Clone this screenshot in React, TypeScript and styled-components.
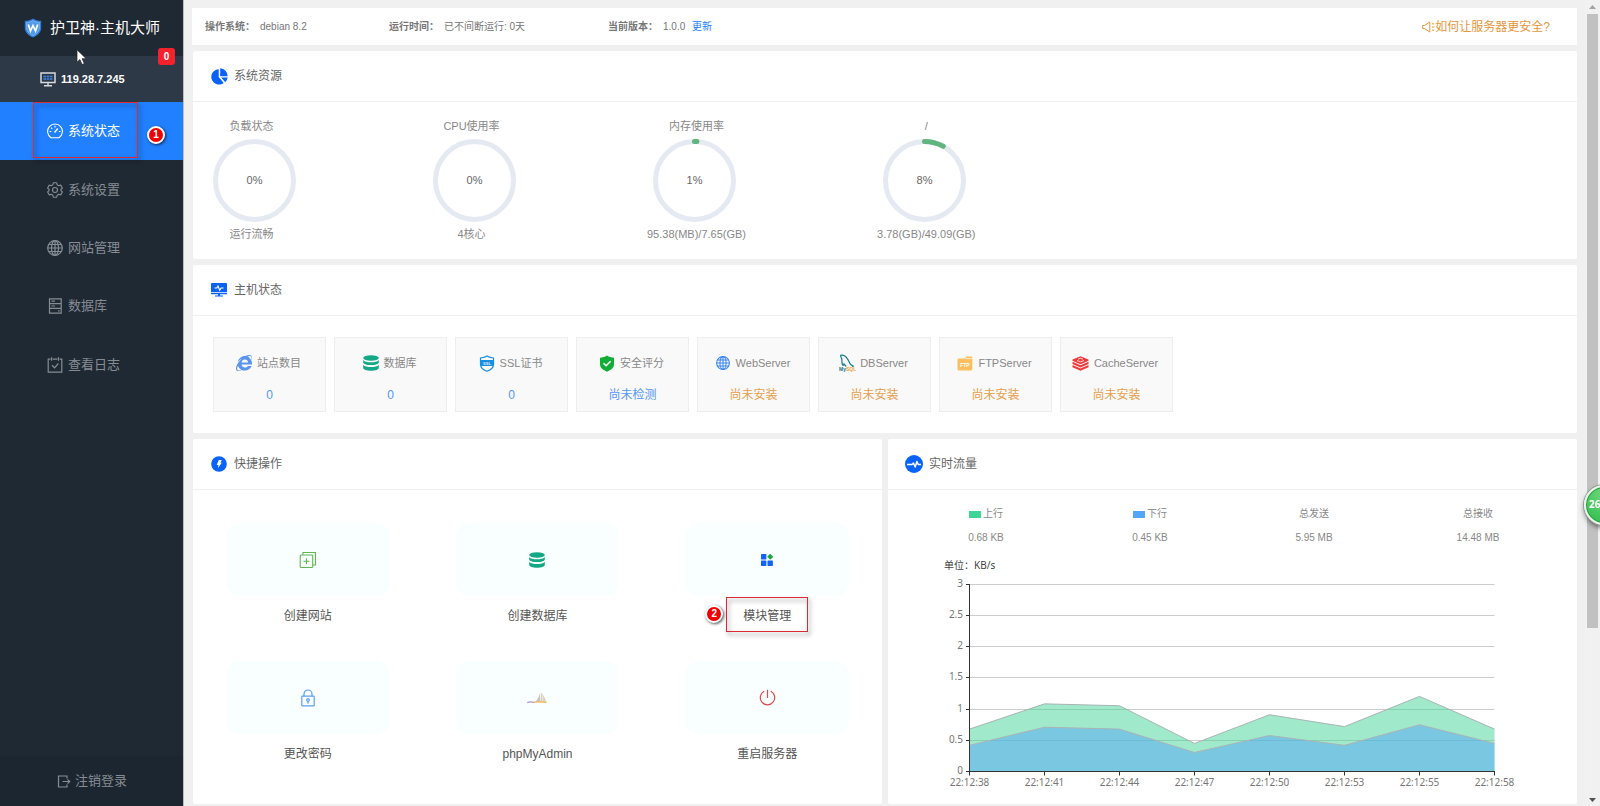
import React from "react";
import styled, { createGlobalStyle } from "styled-components";
import { FaInternetExplorer } from "react-icons/fa";

const GlobalStyle = createGlobalStyle`
  *, *::before, *::after { box-sizing: border-box; }
  body {
    margin: 0;
    background: #f0f0f0;
    color: #666;
    font: 12px/16px "Liberation Sans", "Noto Sans CJK SC", sans-serif;
  }
  a { color: inherit; text-decoration: none; }
  h1, h2, p, ul, dl, dd { margin: 0; padding: 0; font-weight: 400; }
  ul { list-style: none; }
  svg { display: block; flex: none; }
`;

/* ---------- frame ---------- */

const Page = styled.div`
  display: flex;
  min-height: 100vh;
`;

const Sidebar = styled.aside`
  position: relative;
  display: flex;
  flex-direction: column;
  flex: none;
  width: 184px;
  background: #1f2934;
  border-right: 1px solid #b9bcc0;
`;

const Brand = styled.h1`
  display: flex;
  align-items: center;
  gap: 8px;
  height: 56px;
  padding-left: 24px;
  color: #fff;
  font-size: 15px;
  line-height: 20px;
  white-space: nowrap;
`;

const Host = styled.div`
  position: relative;
  display: flex;
  align-items: center;
  gap: 5px;
  height: 46px;
  padding-left: 40px;
  background: #2e3947;
  color: #fff;
  font-size: 11px;
  font-weight: 700;
`;

const Count = styled.span`
  position: absolute;
  top: -8px;
  right: 8px;
  width: 17px;
  height: 17px;
  border-radius: 3px;
  background: #f5222d;
  font-size: 10px;
  line-height: 17px;
  text-align: center;
`;

const Nav = styled.nav`
  display: flex;
  flex-direction: column;
  height: 292px;
`;

const NavLink = styled.a<{ $active?: boolean }>`
  position: relative;
  display: flex;
  flex: 1;
  align-items: center;
  gap: 5px;
  padding-left: 47px;
  font-size: 13px;
  line-height: 20px;
  color: ${(p) => (p.$active ? "#fff" : "#868c93")};
  background: ${(p) => (p.$active ? "#2080ff" : "transparent")};
`;

const Logout = styled.button`
  display: flex;
  align-items: center;
  gap: 4px;
  height: 50px;
  margin-top: auto;
  padding: 0 0 0 57px;
  border: 0;
  background: #1c2630;
  color: #868c93;
  font: inherit;
  font-size: 13px;
`;

const Main = styled.main`
  display: flex;
  flex: 1;
  flex-direction: column;
  gap: 6px;
  min-width: 0;
  padding: 8px 8px 2px;
`;

/* ---------- annotations ---------- */

const Outline = styled.span`
  position: absolute;
  border: 1px solid #d92a35;
  filter: drop-shadow(2px 3px 2px rgba(0, 0, 0, 0.5));
  pointer-events: none;
`;

const NavOutline = styled(Outline)`
  top: 0;
  left: 33px;
  width: 105px;
  height: 56px;
`;

const LabelOutline = styled(Outline)`
  inset: 1px -17px 4px;
`;

const Step = styled.span`
  position: absolute;
  width: 18px;
  height: 18px;
  border: 2px solid #fff;
  border-radius: 50%;
  background: #f00000;
  box-shadow: 1px 1px 3px rgba(0, 0, 0, 0.7);
  color: #fff;
  font-size: 10px;
  font-weight: 700;
  line-height: 14px;
  text-align: center;
`;

const NavStep = styled(Step)`
  top: 24px;
  right: 18px;
`;

const LabelStep = styled(Step)`
  top: 9px;
  left: -38px;
`;

const Pointer = styled.svg`
  position: absolute;
  top: 49px;
  left: 76px;
  z-index: 2;
`;

const Ball = styled.div`
  position: fixed;
  top: 485px;
  right: -24px;
  width: 40px;
  height: 40px;
  padding-left: 3px;
  border: 2px solid #e9f3ea;
  border-radius: 50%;
  background: radial-gradient(circle at 50% 20%, #6fd67b, #3cc257 75%);
  box-shadow: 0 0 0 1px #8f9a90, inset 0 0 0 1px #279a3e, 0 3px 5px rgba(0, 0, 0, 0.5);
  color: #fff;
  font: 700 10px/34px "Noto Sans", sans-serif;
`;

const Track = styled.div`
  display: flex;
  flex: none;
  flex-direction: column;
  align-items: center;
  width: 15px;
  padding: 5px 0 4px;
  background: #f1f1f1;
`;

const Thumb = styled.div`
  flex: 0 0 77%;
  width: 11px;
  margin: 5px 0 auto;
  background: #c1c1c1;
`;

/* ---------- top bar ---------- */

const InfoBar = styled.header`
  display: flex;
  align-items: center;
  height: 37px;
  padding: 0 27px 0 13px;
  background: #fff;
  color: #777;
  font-size: 10px;
`;

const Info = styled.p<{ $width: number }>`
  flex: 0 0 ${(p) => p.$width}px;
  b { margin-right: 5px; }
  a { margin-left: 4px; color: #2080ff; }
`;

const Tip = styled.a`
  display: flex;
  align-items: center;
  margin-left: auto;
  color: #e6963c;
  font-size: 12px;
`;

/* ---------- cards ---------- */

const Panel = styled.section`
  margin-left: 1px;
  border-radius: 2px;
  background: #fff;
`;

const PanelTitle = styled.h2`
  display: flex;
  align-items: center;
  gap: 6px;
  height: 51px;
  padding-left: 17px;
  border-bottom: 1px solid #f0f0f0;
  font-size: 12px;
`;

const IconBox = styled.span<{ $size: number }>`
  display: flex;
  flex: none;
  align-items: center;
  justify-content: center;
  width: ${(p) => p.$size}px;
`;

const Gauges = styled.div`
  display: flex;
  gap: 131px;
  padding: 16px 14px 17px;
`;

const GaugeItem = styled.div`
  display: flex;
  flex-direction: column;
  color: #888;
  font-size: 11px;
  text-align: center;
`;

const Ring = styled.div`
  position: relative;
  width: 83px;
  height: 83px;
  margin: 5px 0 4px 6px;
`;

const Percent = styled.span`
  position: absolute;
  inset: 0;
  color: #666;
  line-height: 83px;
`;

const HostGrid = styled.ul`
  display: flex;
  flex-wrap: wrap;
  gap: 8px;
  padding: 21px 20px;
`;

const HostTile = styled.li`
  width: 113px;
  height: 75px;
  padding-top: 17px;
  border: 1px solid #eee;
  background: #f9f9f9;
  text-align: center;
`;

const HostName = styled.p`
  display: flex;
  align-items: center;
  justify-content: center;
  gap: 5px;
  height: 16px;
  padding-right: 2px;
  color: #888;
  font-size: 11px;
`;

const HostValue = styled.a<{ $warn?: boolean }>`
  display: block;
  margin-top: 16px;
  color: ${(p) => (p.$warn ? "#e6a04c" : "#5397fa")};
`;

const Bottom = styled.div`
  display: grid;
  grid-template-columns: 1fr 1fr;
  gap: 6px;
  margin-left: 1px;
  ${Panel} { margin-left: 0; }
`;

const Actions = styled.div`
  display: grid;
  grid-template-columns: repeat(3, 1fr);
  row-gap: 25px;
  padding: 33px 0 30px;
`;

const Action = styled.button`
  display: flex;
  flex-direction: column;
  align-items: center;
  padding: 0 33px;
  border: 0;
  background: none;
  color: #555;
  font: inherit;
`;

const ActionArt = styled.span`
  display: flex;
  align-items: center;
  justify-content: center;
  width: 100%;
  height: 73px;
  border-radius: 14px;
  background: #f9ffff;
`;

const ActionLabel = styled.span`
  position: relative;
  line-height: 40px;
`;

const Traffic = styled.div`
  padding: 16px 17px 0 16px;
`;

const Totals = styled.dl`
  display: grid;
  grid-template-columns: repeat(4, 1fr);
  color: #888;
  font-size: 10px;
  text-align: center;
  dt { display: flex; align-items: center; justify-content: center; gap: 2px; margin-bottom: 8px; }
`;

const Swatch = styled.i<{ $color: string }>`
  width: 12px;
  height: 7px;
  background: ${(p) => p.$color};
`;

const ChartSvg = styled.svg`
  width: 100%;
  height: auto;
  margin-top: 4px;
  font-family: "Noto Sans", "Noto Sans CJK SC", sans-serif;
  font-size: 10px;
`;

/* ---------- icons ---------- */

const line = { fill: "none", stroke: "currentColor" } as const;

const ShieldLogo = () => (
  <svg width="18" height="20" viewBox="0 0 18 20">
    <path d="M9 .5C6.700 2 3.800 2.800.8 2.800v7c0 4.500 3.200 7.700 8.200 9.700 5-2 8.200-5.200 8.200-9.700v-7C14.200 2.800 11.300 2 9 .5z" fill="#2f7bd6" />
    <path d="M9 2.600C7 3.700 4.900 4.300 2.600 4.400v5.300c0 3.600 2.500 6.200 6.400 7.900 3.900-1.700 6.400-4.300 6.400-7.900V4.400C13.100 4.300 11 3.700 9 2.600z" fill="#4f9bea" stroke="#8fc2f7" strokeWidth=".7" />
    <path d="M4.300 6.500l2.200 6.500L9 7.500l2.500 5.500 2.200-6.500" fill="none" stroke="#fff" strokeWidth="1.700" />
  </svg>
);

const ComputerIcon = () => (
  <svg width="16" height="15" viewBox="0 0 16 15">
    <rect x="1" y="1" width="14" height="9.500" fill="none" stroke="#d5dae0" strokeWidth="1.500" />
    <path d="M3.500 4.500h9M3.500 7h9" stroke="#3d8cf0" strokeWidth="1.400" strokeDasharray="2.500 .7" />
    <path d="M8 10.500v3M4 13.800h8" stroke="#d5dae0" strokeWidth="1.400" />
  </svg>
);

const DashIcon = () => (
  <svg width="16" height="16" viewBox="0 0 16 16" {...line} strokeWidth="1.100">
    <path d="M4 14.700a7.400 7.400 0 1 1 8 0z" />
    <path d="M7.500 9.500l3.300-4" strokeWidth="1.400" />
    <path d="M8 2.800v1.700M2.600 8.500h1.700M11.900 8.500h1.600M4.200 4.700l1.100 1.100" />
  </svg>
);

const GearIcon = () => (
  <svg width="16" height="16" viewBox="0 0 16 16" {...line} strokeWidth="1.100" strokeLinejoin="round">
    <path d="M6.300.8h3.400l.5 2 1.500.9 2-.6 1.700 2.900L13.900 7.500v1.100l1.500 1.400-1.700 2.900-2-.6-1.500.9-.5 2H6.300l-.5-2-1.500-.9-2 .6L.6 10l1.500-1.400V7.500L.6 6l1.700-2.900 2 .6 1.500-.9z" />
    <circle cx="8" cy="8" r="2.500" />
  </svg>
);

const GlobeIcon = ({ size = 16, color = "currentColor" }: { size?: number; color?: string }) => (
  <svg width={size} height={size} viewBox="0 0 16 16" fill="none" stroke={color} strokeWidth="1.200">
    <circle cx="8" cy="8" r="7.300" />
    <ellipse cx="8" cy="8" rx="3.500" ry="7.300" />
    <path d="M8 .7v14.600M.7 8h14.600M1.600 4.500h12.800M1.600 11.500h12.800" />
  </svg>
);

const ServerIcon = () => (
  <svg width="16" height="16" viewBox="0 0 16 16" {...line} strokeWidth="1.200">
    <path d="M2.500.8h11.700v14.400H2.500zM2.500 5.600h11.700M2.500 10.400h11.700M4.500 3.200h3.500M4.500 8h3.500M11 12.900h1.500" />
  </svg>
);

const LogIcon = () => (
  <svg width="16" height="16" viewBox="0 0 16 16" {...line} strokeWidth="1.200">
    <path d="M3.500 2.200H1.200v12.900h13.600V2.200h-2.300M5.800 2.200h4.400M4.600.3v3.500M11.400.3v3.500M5 8.300l2.600 2.500 3.700-4.300" />
  </svg>
);

const ExitIcon = () => (
  <svg width="14" height="13" viewBox="0 0 14 13" {...line} strokeWidth="1.200">
    <path d="M10 3.500V1H1.500v11H10V9.500M5.500 6.500h7M10.500 4.300l2.200 2.200-2.200 2.200" />
  </svg>
);

const HornIcon = () => (
  <svg width="13" height="12" viewBox="0 0 13 12" {...line} strokeWidth="1">
    <path d="M.7 4.500v3h1.800L7.800 11V1L2.500 4.500zM10 2.800h2M10 6h2.500M10 9.200h2" />
  </svg>
);

const PieIcon = () => (
  <svg width="17" height="17" viewBox="0 0 17 17" fill="#0a62f7">
    <path d="M7.700 1.200A7.700 7.700 0 1 0 12.700 15L7.700 9z" />
    <path d="M9.200.3v7.900h7.500A7.900 7.900 0 0 0 9.200.3z" />
    <path d="M10.200 9.600l4 4.600a7.500 7.500 0 0 0 2.500-4.600z" />
  </svg>
);

const MonitorIcon = () => (
  <svg width="16" height="14" viewBox="0 0 16 14" fill="#0a62f7">
    <path d="M1 0h14a1 1 0 0 1 1 1v8H0V1a1 1 0 0 1 1-1zM0 9.800h16v1.400H0zM7 11h2v1.500H7zM4 12.500h8v1H4z" />
    <path d="M3.500 5h2.300l1.200-2 1.700 4.200L10 5h2.500" fill="none" stroke="#fff" strokeWidth="1.100" />
  </svg>
);

const BoltIcon = () => (
  <svg width="16" height="16" viewBox="0 0 16 16">
    <circle cx="8" cy="8" r="7.800" fill="#0a62f7" />
    <path d="M7.800 4h3L9.500 6.800h1.300L6.800 12.200 7.500 9H5.700z" fill="#fff" />
  </svg>
);

const PulseIcon = () => (
  <svg width="18" height="18" viewBox="0 0 18 18">
    <circle cx="9" cy="9" r="9" fill="#0a62f7" />
    <path d="M2 9.500h5l1.500-1.500 1.700 4 1.700-5.500 1.300 3H16" fill="none" stroke="#fff" strokeWidth="1.500" strokeLinejoin="round" />
  </svg>
);

const DiskIcon = () => (
  <svg width="16" height="16" viewBox="0 0 16 16" fill="#13a886">
    <ellipse cx="8" cy="3" rx="7.800" ry="2.800" />
    <path d="M.2 4.900C1.500 6.700 4.600 7.300 8 7.300s6.500-.6 7.800-2.400v2.600c0 1.500-3.500 2.600-7.800 2.600S.2 9 .2 7.500z" />
    <path d="M.2 9.700c1.300 1.800 4.400 2.400 7.800 2.400s6.500-.6 7.800-2.400v3.200c0 1.600-3.500 2.800-7.800 2.800S.2 14.500.2 12.900z" />
  </svg>
);

const SslIcon = () => (
  <svg width="16" height="17" viewBox="0 0 16 17">
    <path d="M8 1C6.200 2.200 3.800 2.900 1.500 3v6.500c0 3.300 2.600 5.300 6.500 6.800 3.900-1.500 6.500-3.500 6.500-6.800V3C12.200 2.900 9.800 2.200 8 1z" fill="#fff" stroke="#1a8fe0" strokeWidth="1.200" />
    <path d="M1.800 5h12.400v6H1.800z" fill="#1a8fe0" />
    <text x="8" y="9.500" fill="#d8eeff" fontSize="4" fontWeight="700" textAnchor="middle">SSL</text>
  </svg>
);

const SafeIcon = () => (
  <svg width="16" height="17" viewBox="0 0 16 17">
    <path d="M8 .5C6 1.900 3.600 2.600 1 2.800v6.500c0 3.600 3 5.900 7 7.400 4-1.500 7-3.800 7-7.400V2.800C12.400 2.600 10 1.900 8 .5z" fill="#12ad36" />
    <path d="M4.500 8.300l2.600 2.500 4.500-4.600" fill="none" stroke="#fff" strokeWidth="1.500" />
  </svg>
);

const MysqlIcon = () => (
  <svg width="17" height="18" viewBox="0 0 17 18">
    <path d="M1.500 1.300C4.500.7 7 2.500 8.500 4.800c1.200 1.900 1.900 4.200 3 5.400 1.200 1 2.300 1.300 2.800 2.200M1.500 1.300c.2 1.700 1 2.500 1.300 3.700.3 1.700-.2 4 .8 6 .7.9 1.200-.3 1.400-1.200.8 1 1.300 2 2.200 2.600" fill="none" stroke="#13798c" strokeWidth="1.200" />
    <path d="M14.800 12.300l-2-.3" stroke="#13798c" />
    <text x="0" y="17.300" fill="#25708c" fontSize="5" fontWeight="700">My<tspan fill="#f0a340">SQL</tspan></text>
  </svg>
);

const FtpIcon = () => (
  <svg width="16" height="15" viewBox="0 0 16 15">
    <path d="M1.500 2.500H8L9.500.6H14a1.300 1.300 0 0 1 1.300 1.300V13A1.500 1.500 0 0 1 14 14.500H2A1.500 1.500 0 0 1 .5 13V3.500a1 1 0 0 1 1-1z" fill="#fdbf5e" />
    <path d="M8.500 2.600h6.800" stroke="#fff" strokeWidth=".7" />
    <text x="8" y="10.500" fill="#fff" fontSize="5" fontWeight="700" textAnchor="middle">FTP</text>
  </svg>
);

const RedisIcon = () => (
  <svg width="17" height="15" viewBox="0 0 17 15" fill="#f0393b">
    <path d="M8.500.3l8 3.200v1.300l-8 3.500-8-3.500V3.500z" />
    <path d="M.5 5.800l8 3.500 8-3.500v2.300l-8 3.500-8-3.500z" />
    <path d="M.5 9.100l8 3.500 8-3.500v2.200l-8 3.500-8-3.500z" />
    <path d="M6 3.200l2.500-1 2.500 1M5 4.500l3.500 1.300L12 4.500" fill="none" stroke="#fff" strokeWidth=".8" />
  </svg>
);

const AddSiteIcon = () => (
  <svg width="18" height="18" viewBox="0 0 18 18" fill="none" stroke="#62b54f" strokeWidth="1.100">
    <rect x="1.200" y="4" width="12.500" height="12.500" rx="1" />
    <path d="M4 3.800V1.500h12.500V14H14M7.500 7.200v6M4.500 10.200h6" />
  </svg>
);

const ModulesIcon = () => (
  <svg width="12" height="12" viewBox="0 0 12 12" fill="#1464f4">
    <rect width="5.400" height="5.400" rx=".6" />
    <rect y="6.500" width="5.400" height="5.400" rx=".6" />
    <rect x="6.500" y="6.500" width="5.400" height="5.400" rx=".6" />
    <path d="M9.200-.3L12.200 2.700 9.200 5.700 6.200 2.700z" fill="#1fa83c" />
  </svg>
);

const LockIcon = () => (
  <svg width="16" height="18" viewBox="0 0 16 18" fill="none" stroke="#5b9ff2" strokeWidth="1.200">
    <rect x="1.800" y="7.200" width="12.400" height="9.600" rx=".6" />
    <path d="M4 7V5a4 4 0 0 1 8 0v2M8 12.200v2.600" />
    <circle cx="8" cy="11" r="1.300" />
  </svg>
);

const SailIcon = () => (
  <svg width="20" height="12" viewBox="0 0 20 12">
    <path d="M8.500 9.700c2-2 3.300-4.500 4.300-8.200.7 2.700.5 5.700-.3 8.200z" fill="#c3c7c2" />
    <path d="M13 9.700c1-2.700 1.200-5.700.8-9.200 2.300 2 4.700 5.700 5 9.200z" fill="#d9cfb8" />
    <path d="M15.200 9.700c.8-2 .8-4.500.3-6.500" fill="none" stroke="#f9ffff" strokeWidth=".7" />
    <path d="M6 10.500c4-1 9-1 13.500-.2" fill="none" stroke="#f3b765" strokeWidth="1.600" />
    <path d="M.3 10.600c2-.9 4-.9 6-.3" fill="none" stroke="#a59bc4" strokeWidth="1.400" />
  </svg>
);

const PowerIcon = () => (
  <svg width="17" height="17" viewBox="0 0 17 17" fill="none" stroke="#e2474b" strokeWidth="1.200">
    <path d="M5.200 2.200a7.200 7.200 0 1 0 6.600 0M8.500.8v8.200" />
  </svg>
);

/* ---------- data ---------- */

const navItems = [
  { label: "系统状态", icon: <DashIcon />, active: true },
  { label: "系统设置", icon: <GearIcon /> },
  { label: "网站管理", icon: <GlobeIcon /> },
  { label: "数据库", icon: <ServerIcon /> },
  { label: "查看日志", icon: <LogIcon /> },
];

const gauges = [
  { title: "负载状态", value: 0, note: "运行流畅" },
  { title: "CPU使用率", value: 0, note: "4核心" },
  { title: "内存使用率", value: 1, note: "95.38(MB)/7.65(GB)" },
  { title: "/", value: 8, note: "3.78(GB)/49.09(GB)" },
];

const hostItems = [
  { name: "站点数目", value: "0", icon: <FaInternetExplorer size={16} color="#5b95f0" /> },
  { name: "数据库", value: "0", icon: <DiskIcon /> },
  { name: "SSL证书", value: "0", icon: <SslIcon /> },
  { name: "安全评分", value: "尚未检测", icon: <SafeIcon /> },
  { name: "WebServer", value: "尚未安装", warn: true, icon: <GlobeIcon size={14} color="#3d86f2" /> },
  { name: "DBServer", value: "尚未安装", warn: true, icon: <MysqlIcon /> },
  { name: "FTPServer", value: "尚未安装", warn: true, icon: <FtpIcon /> },
  { name: "CacheServer", value: "尚未安装", warn: true, icon: <RedisIcon /> },
];

const actions = [
  { label: "创建网站", icon: <AddSiteIcon /> },
  { label: "创建数据库", icon: <DiskIcon /> },
  { label: "模块管理", icon: <ModulesIcon />, step: 2 },
  { label: "更改密码", icon: <LockIcon /> },
  { label: "phpMyAdmin", icon: <SailIcon /> },
  { label: "重启服务器", icon: <PowerIcon /> },
];

const totals = [
  { label: "上行", value: "0.68 KB", color: "#41d498" },
  { label: "下行", value: "0.45 KB", color: "#53a6f9" },
  { label: "总发送", value: "5.95 MB" },
  { label: "总接收", value: "14.48 MB" },
];

const times = ["22:12:38", "22:12:41", "22:12:44", "22:12:47", "22:12:50", "22:12:53", "22:12:55", "22:12:58"];
const upload = [0.68, 1.085, 1.055, 0.45, 0.91, 0.72, 1.205, 0.68];
const download = [0.42, 0.71, 0.68, 0.305, 0.577, 0.42, 0.75, 0.45];
const ticks = [0, 0.5, 1, 1.5, 2, 2.5, 3];

/* ---------- parts ---------- */

const Gauge = ({ title, value, note }: { title: string; value: number; note: string }) => (
  <GaugeItem>
    <span>{title}</span>
    <Ring>
      <svg width="83" height="83" viewBox="0 0 83 83" fill="none" strokeWidth="5">
        <circle cx="41.5" cy="41.5" r="39" stroke="#e5e9f2" />
        {value > 0 && (
          <circle
            cx="41.5"
            cy="41.5"
            r="39"
            stroke="#5fb57e"
            strokeLinecap="round"
            pathLength={100}
            strokeDasharray={`${value} 100`}
            transform="rotate(-90 41.5 41.5)"
          />
        )}
      </svg>
      <Percent>{value}%</Percent>
    </Ring>
    <span>{note}</span>
  </GaugeItem>
);

const LEFT = 65.5;
const BASE = 221.5;
const xAt = (i: number) => LEFT + i * 75;
const yAt = (v: number) => BASE - Math.round((v * 187) / 3);
const points = (data: number[]) => data.map((v, i) => `${xAt(i)},${BASE - (v * 187) / 3}`).join(" ");

const Series = ({ data, color }: { data: number[]; color: string }) => (
  <g>
    <polygon points={`${xAt(0)},${BASE} ${points(data)} ${xAt(7)},${BASE}`} fill={color} fillOpacity=".5" />
    <polyline points={points(data)} fill="none" stroke="#aab4b4" />
  </g>
);

const TrafficChart = () => (
  <ChartSvg viewBox="0 0 656 240" role="img" aria-label="实时流量">
    <text x="40" y="19" fill="#444">单位：KB/s</text>
    {ticks.map((t) => (
      <g key={t}>
        <path d={`M${LEFT} ${yAt(t)}H590.5`} stroke="#ccc" />
        <text x="59" y={yAt(t) + 2} fill="#777" textAnchor="end">{t}</text>
      </g>
    ))}
    <Series data={upload} color="#41d498" />
    <Series data={download} color="#53a6f9" />
    <path d={`M${LEFT} 34V${BASE}H591`} fill="none" stroke="#333" />
    {ticks.map((t) => (
      <path key={t} d={`M62 ${yAt(t)}h4`} stroke="#333" />
    ))}
    {times.map((t, i) => (
      <g key={t}>
        <path d={`M${xAt(i)} ${BASE}v4`} stroke="#333" />
        <text x={xAt(i)} y="236" fill="#777" textAnchor="middle">{t}</text>
      </g>
    ))}
  </ChartSvg>
);

export default function App() {
  return (
    <Page>
      <GlobalStyle />
      <Sidebar>
        <Brand><ShieldLogo />护卫神·主机大师</Brand>
        <Host><ComputerIcon />119.28.7.245<Count>0</Count></Host>
        <Nav>
          {navItems.map((n) => (
            <NavLink key={n.label} href="#" $active={n.active}>
              {n.icon}
              {n.label}
              {n.active && <><NavOutline /><NavStep>1</NavStep></>}
            </NavLink>
          ))}
        </Nav>
        <Logout type="button"><ExitIcon />注销登录</Logout>
        <Pointer width="12" height="17" viewBox="0 0 12 17">
          <path d="M1 .8v12.400l2.900-2.700 2.200 5 2.200-1-2.200-4.800h4.100z" fill="#fff" stroke="#222" strokeWidth=".7" />
        </Pointer>
      </Sidebar>

      <Main>
        <InfoBar>
          <Info $width={184}><b>操作系统：</b>debian 8.2</Info>
          <Info $width={219}><b>运行时间：</b>已不间断运行: 0天</Info>
          <Info $width={160}><b>当前版本：</b>1.0.0 <a href="#">更新</a></Info>
          <Tip href="#"><HornIcon />如何让服务器更安全?</Tip>
        </InfoBar>

        <Panel>
          <PanelTitle><IconBox $size={18}><PieIcon /></IconBox>系统资源</PanelTitle>
          <Gauges>{gauges.map((g) => <Gauge key={g.title} {...g} />)}</Gauges>
        </Panel>

        <Panel>
          <PanelTitle><IconBox $size={18}><MonitorIcon /></IconBox>主机状态</PanelTitle>
          <HostGrid>
            {hostItems.map((h) => (
              <HostTile key={h.name}>
                <HostName>
                  <IconBox $size={16}>{h.icon}</IconBox>
                  {h.name}
                </HostName>
                <HostValue href="#" $warn={h.warn}>{h.value}</HostValue>
              </HostTile>
            ))}
          </HostGrid>
        </Panel>

        <Bottom>
          <Panel>
            <PanelTitle><IconBox $size={18}><BoltIcon /></IconBox>快捷操作</PanelTitle>
            <Actions>
              {actions.map((a) => (
                <Action key={a.label} type="button">
                  <ActionArt>{a.icon}</ActionArt>
                  <ActionLabel>
                    {a.label}
                    {a.step && <><LabelOutline /><LabelStep>{a.step}</LabelStep></>}
                  </ActionLabel>
                </Action>
              ))}
            </Actions>
          </Panel>
          <Panel>
            <PanelTitle><IconBox $size={18}><PulseIcon /></IconBox>实时流量</PanelTitle>
            <Traffic>
              <Totals>
                {totals.map((t) => (
                  <div key={t.label}>
                    <dt>{t.color && <Swatch $color={t.color} />}{t.label}</dt>
                    <dd>{t.value}</dd>
                  </div>
                ))}
              </Totals>
              <TrafficChart />
            </Traffic>
          </Panel>
        </Bottom>
      </Main>

      <Track aria-hidden="true">
        <svg width="7" height="4" viewBox="0 0 7 4"><path d="M3.500 0L7 4H0z" fill="#a3a3a3" /></svg>
        <Thumb />
        <svg width="7" height="4" viewBox="0 0 7 4"><path d="M0 0h7L3.500 4z" fill="#505050" /></svg>
      </Track>
      <Ball>26</Ball>
    </Page>
  );
}
